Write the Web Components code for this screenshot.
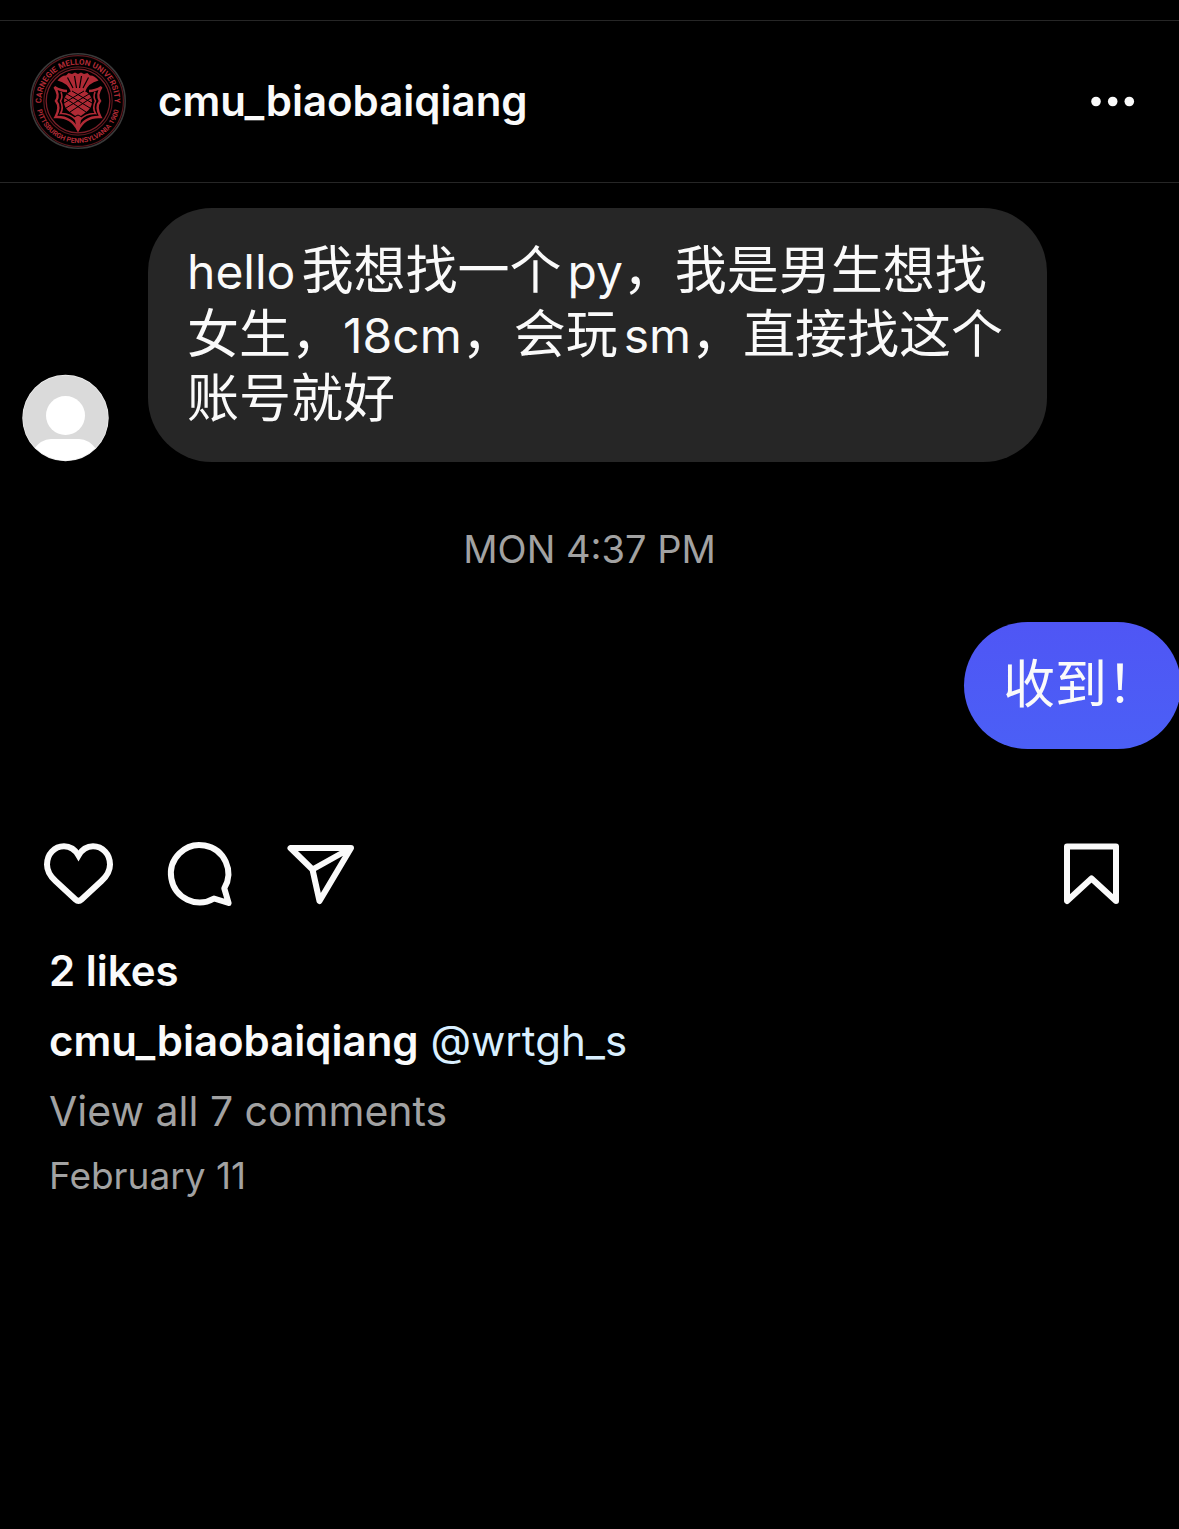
<!DOCTYPE html>
<html lang="en">
<head>
<meta charset="utf-8">
<meta name="viewport" content="width=device-width, initial-scale=1">
<title>cmu_biaobaiqiang</title>
<style>
  html { background: #000; }
  body {
    margin: 0;
    background: #000;
    color: #fafafa;
    font-family: Inter, "Noto Sans CJK SC", sans-serif;
    overflow-x: hidden;
  }
</style>
</head>
<body>
<insta-post></insta-post>

<script>
const define = (name, html) => {
  const template = document.createElement('template');
  template.innerHTML = html;
  customElements.define(name, class extends HTMLElement {
    constructor() {
      super();
      this.attachShadow({ mode: 'open' }).append(template.content.cloneNode(true));
    }
  });
};

/* University seal: ring lettering around a thistle and shield */
define('seal-avatar', `
  <style>
    :host { display: block; flex: none; width: 96px; height: 96px; }
    svg { display: block; width: 100%; height: 100%; }
    text { font: 700 8px Roboto, sans-serif; fill: #b02a35; }
    .low { font-size: 7px; }
  </style>
  <svg viewBox="0 0 96 96" role="img" aria-label="Carnegie Mellon University seal">
    <defs>
      <path id="upper" d="M11.600 52 A36.600 36.600 0 1 1 84.400 52"/>
      <path id="lower" d="M6.600 54 A41.800 41.800 0 0 0 89.400 54"/>
    </defs>
    <g fill="none">
      <circle cx="48" cy="48" r="47.200" stroke="#3a3a3a" stroke-width="1.600"/>
      <circle cx="48" cy="48" r="45.400" stroke="#5a171d" stroke-width="1.200"/>
      <circle cx="48" cy="48" r="34.200" stroke="#5a171d" stroke-width="1.200"/>
      <circle cx="48" cy="48" r="31.800" stroke="#7a1f28" stroke-width="1.300"/>
    </g>
    <text text-anchor="middle"><textPath href="#upper" startOffset="50%">CARNEGIE MELLON UNIVERSITY</textPath></text>
    <text class="low" text-anchor="middle"><textPath href="#lower" startOffset="50%">PITTSBURGH PENNSYLVANIA 1900</textPath></text>
    <g fill="#b02a35">
      <path d="M41 39 Q38 30 27.500 27.500 Q32 22 36 22.500 L38.500 20 L42 21 L45 19.500 L48 21 L51 19.500 L54 21 L57.500 20 L60 22.500 Q64 22 68.500 27.500 Q58 30 55 39 Q48 42 41 39Z"/>
      <path d="M48 37 C57 37 62 42 62 49 C62 56 55 60 52 62 L48 66 L44 62 C41 60 34 56 34 49 C34 42 39 37 48 37Z"/>
      <path d="M44.500 64 H51.500 L49 78 H47Z"/>
    </g>
    <g fill="none" stroke="#000">
      <path d="M43 35 L37.500 24.500 M46.500 35 L44.500 23 M49.500 35 L51.500 23 M53 35 L58.500 24.500" stroke-width="1.200"/>
      <path d="M35 45 L56 59 M37 41 L60 55 M42 38 L62 50 M61 45 L40 59 M59 41 L36 55 M54 38 L34 50" stroke-width="1"/>
      <path d="M42 65 L48 62 L54 65" stroke-width="1"/>
    </g>
    <g fill="none" stroke="#b02a35" stroke-width="2.400" stroke-linejoin="miter">
      <path d="M37 38 Q31 38 24.500 34 Q30 42 26 48 Q31 54 25.500 64 Q41 63 48 77 Q55 63 70.500 64 Q65 54 70 48 Q66 42 71.500 34 Q65 38 59 38"/>
      <path d="M31 39 Q33 44 30.500 48 Q34 55 30.500 60.500 Q40 60 46 67 M65 39 Q63 44 65.500 48 Q62 55 65.500 60.500 Q56 60 50 67" stroke-width="1.600"/>
    </g>
  </svg>`);

define('default-avatar', `
  <style>
    :host { display: block; flex: none; width: 88px; height: 88px; }
    svg { display: block; width: 100%; height: 100%; }
  </style>
  <svg viewBox="0 0 88 88" role="img" aria-label="Anonymous sender">
    <defs><clipPath id="disc"><circle cx="44.500" cy="44" r="42.600"/></clipPath></defs>
    <circle cx="44.500" cy="44" r="43.200" fill="#f2f2f2"/>
    <g clip-path="url(#disc)">
      <rect width="88" height="88" fill="#dadada"/>
      <circle cx="44.500" cy="41.500" r="19.500" fill="#fff"/>
      <path d="M12 76 Q20 65 30 65 H58 Q68 65 76 76 V88 H12Z" fill="#fff"/>
    </g>
  </svg>`);

define('post-header', `
  <style>
    :host {
      display: flex; align-items: center; gap: 32px;
      margin-top: 20px; padding: 32px 44px 33px 30px;
      border: solid #262626; border-width: 1px 0;
    }
    a { color: inherit; text-decoration: none; font-size: 42px; line-height: 56px; font-weight: 600; }
    button { margin-left: auto; padding: 0; border: 0; background: none; color: inherit; }
    svg { display: block; width: 44px; height: 44px; fill: currentColor; }
  </style>
  <seal-avatar></seal-avatar>
  <a href="#profile"><slot></slot></a>
  <button type="button" aria-label="More options">
    <svg viewBox="0 0 44 44"><circle cx="5" cy="22.500" r="4.800"/><circle cx="21.700" cy="22.500" r="4.800"/><circle cx="38.300" cy="22.500" r="4.800"/></svg>
  </button>`);

define('chat-bubble', `
  <style>
    :host {
      display: block; box-sizing: border-box;
      padding: 31px 36px 31px 39px; border-radius: 64px;
      background: #262626; color: #fafafa;
      font-size: 52px; line-height: 64px;
    }
    :host([sent]) {
      background: linear-gradient(#4f56f5, #4b5ff6);
      padding: 31px 22px 32px 39px;
    }
    ::slotted(span[lang="en"]) { font-size: 48px; line-height: 1; }
    ::slotted(span.lead) { margin-left: 6px; }
    ::slotted(span.trail) { margin-right: 6px; }
  </style>
  <slot></slot>`);

define('chat-capture', `
  <style>
    :host { display: block; padding-top: 25px; overflow: hidden; }
    .received { display: flex; align-items: flex-end; gap: 39px; padding: 0 132px 0 21px; }
    .received chat-bubble { flex: 1; }
    time { display: block; margin: 63px 0 49px; text-align: center; color: #a2a2a2; font-size: 38px; line-height: 48px; }
    .sent { display: flex; justify-content: flex-end; margin-right: -2px; }
  </style>
  <div class="received">
    <default-avatar></default-avatar>
    <chat-bubble lang="zh-CN"><span lang="en" class="trail">hello</span><span>我想找一个</span><span lang="en" class="lead">py</span><span>，我是男生想找</span><span>女生，</span><span lang="en">18cm</span><span>，会玩</span><span lang="en" class="lead">sm</span><span>，直接找这个</span><span>账号就好</span></chat-bubble>
  </div>
  <time>MON 4:37 PM</time>
  <div class="sent"><chat-bubble sent lang="zh-CN">收到！</chat-bubble></div>`);

define('action-bar', `
  <style>
    :host { display: flex; gap: 49px; padding: 89px 51px 0 43px; }
    button { padding: 0; border: 0; background: none; color: inherit; }
    button:last-child { margin-left: auto; }
    svg { display: block; width: 72px; height: 72px; fill: none; stroke: currentColor; stroke-width: 6; stroke-linejoin: round; }
    .sharp { stroke-linejoin: miter; }
  </style>
  <button type="button" aria-label="Like"><svg class="sharp" viewBox="0 0 72 72"><path d="M35.500 17.500C32 11.500 27 8.300 21 8.300C11.500 8.300 4 16 4 26.500C4 33 7.500 38.500 12.500 43L32.500 61.500Q35.500 64.300 38.500 61.500L58.500 43C63.500 38.500 67 33 67 26.500C67 16 59.500 8.300 50 8.300C44 8.300 39 11.500 35.500 17.500Z"/></svg></button>
  <button type="button" aria-label="Comment"><svg viewBox="0 0 72 72"><path d="M60.300 50.300A28.700 28.700 0 1 0 50 60.500L64.600 65Z"/></svg></button>
  <button type="button" aria-label="Share"><svg viewBox="0 0 72 72"><path d="M5.500 10H66L34.500 63L27.500 31.500ZM27.500 31.500L66 10"/></svg></button>
  <button type="button" aria-label="Save"><svg viewBox="0 0 72 72"><path d="M11 8.500H60V63L35.500 40.500L11 63Z"/></svg></button>`);

define('post-details', `
  <style>
    :host { display: block; padding: 26px 49px; font-size: 42px; line-height: 70px; }
    p { margin: 0; }
    a { color: inherit; text-decoration: none; }
    .strong { font-weight: 600; }
    .mention { color: #d9efff; }
    .quiet { color: #a2a2a2; }
    .comments { font-size: 41px; }
    .date { display: block; font-size: 37px; line-height: 60px; }
  </style>
  <p class="strong">2 likes</p>
  <p><a class="strong" href="#profile">cmu_biaobaiqiang</a> <a class="mention" href="#mention">@wrtgh_s</a></p>
  <p class="quiet comments"><a href="#comments">View all 7 comments</a></p>
  <time class="quiet date">February 11</time>`);

define('insta-post', `
  <style>:host { display: flow-root; }</style>
  <article>
    <post-header>cmu_biaobaiqiang</post-header>
    <chat-capture></chat-capture>
    <action-bar></action-bar>
    <post-details></post-details>
  </article>`);
</script>
</body>
</html>
